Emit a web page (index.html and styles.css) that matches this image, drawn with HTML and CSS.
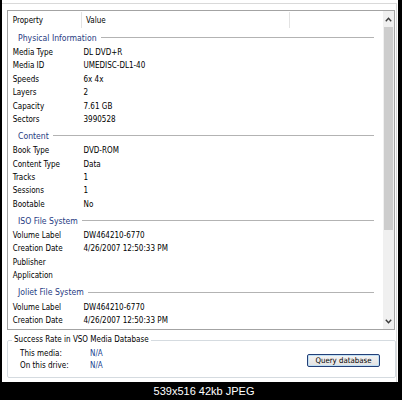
FILE: index.html
```html
<!DOCTYPE html>
<html>
<head>
<meta charset="utf-8">
<link rel="stylesheet" href="styles.css">
</head>
<body>
<div class="frame">
  <div class="panel">
    <div class="listview">
      <div class="lv-main">
        <div class="lv-header">
          <div class="hcell hprop">Property</div>
          <div class="hcell hval">Value</div>
        </div>
        <div class="group"><span>Physical Information</span><i class="gline"></i></div>
        <div class="row"><span class="k">Media Type</span><span class="v">DL DVD+R</span></div>
        <div class="row"><span class="k">Media ID</span><span class="v">UMEDISC-DL1-40</span></div>
        <div class="row"><span class="k">Speeds</span><span class="v">6x 4x</span></div>
        <div class="row"><span class="k">Layers</span><span class="v">2</span></div>
        <div class="row"><span class="k">Capacity</span><span class="v">7.61 GB</span></div>
        <div class="row"><span class="k">Sectors</span><span class="v">3990528</span></div>
        <div class="group"><span>Content</span><i class="gline"></i></div>
        <div class="row"><span class="k">Book Type</span><span class="v">DVD-ROM</span></div>
        <div class="row"><span class="k">Content Type</span><span class="v">Data</span></div>
        <div class="row"><span class="k">Tracks</span><span class="v">1</span></div>
        <div class="row"><span class="k">Sessions</span><span class="v">1</span></div>
        <div class="row"><span class="k">Bootable</span><span class="v">No</span></div>
        <div class="group"><span>ISO File System</span><i class="gline"></i></div>
        <div class="row"><span class="k">Volume Label</span><span class="v">DW464210-6770</span></div>
        <div class="row"><span class="k">Creation Date</span><span class="v">4/26/2007 12:50:33 PM</span></div>
        <div class="row"><span class="k">Publisher</span><span class="v"></span></div>
        <div class="row"><span class="k">Application</span><span class="v"></span></div>
        <div class="group"><span>Joliet File System</span><i class="gline"></i></div>
        <div class="row"><span class="k">Volume Label</span><span class="v">DW464210-6770</span></div>
        <div class="row"><span class="k">Creation Date</span><span class="v">4/26/2007 12:50:33 PM</span></div>
      </div>
      <div class="scrollbar">
        <div class="arrow">
          <svg width="7" height="5" viewBox="0 0 7 5"><path d="M0.8 4.2 L3.5 1.3 L6.2 4.2" fill="none" stroke="#3a3a3a" stroke-width="1.4"/></svg>
        </div>
        <div class="thumb"></div>
        <div class="track"></div>
        <div class="arrow">
          <svg width="7" height="5" viewBox="0 0 7 5"><path d="M0.8 0.8 L3.5 3.7 L6.2 0.8" fill="none" stroke="#3a3a3a" stroke-width="1.4"/></svg>
        </div>
      </div>
    </div>
    <fieldset class="box">
      <legend>Success Rate in VSO Media Database</legend>
      <div class="box-body">
        <div class="stats">
          <div class="srow"><span class="sk">This media:</span><span class="sv">N/A</span></div>
          <div class="srow"><span class="sk">On this drive:</span><span class="sv">N/A</span></div>
        </div>
        <button class="btn">Query database</button>
      </div>
    </fieldset>
  </div>
</div>
<div class="caption">539x516 42kb JPEG</div>
</body>
</html>
```
FILE: styles.css
```css
html, body {
  margin: 0;
  padding: 0;
}
body {
  width: 402px;
  height: 400px;
  overflow: hidden;
  background: #000;
  font-family: "DejaVu Sans Condensed", "Liberation Sans", sans-serif;
  font-size: 8px;
  color: #000;
}
.frame {
  margin-left: 2px;
  width: 396px;
  height: 382px;
  background: #fff;
  padding-top: 3px;
  box-sizing: border-box;
}
.panel {
  width: 395px;
  height: 379px;
  box-sizing: border-box;
  border-top: 1px solid #d9d9d9;
  border-right: 1px solid #d9d9d9;
  padding: 6px 0 0 5px;
}
.listview {
  width: 388px;
  height: 320px;
  box-sizing: border-box;
  border: 1px solid #a3a3a3;
  display: flex;
  overflow: hidden;
}
.lv-main {
  flex: 1;
  min-width: 0;
}
.lv-header {
  height: 17.1px;
  display: flex;
  align-items: flex-end;
}
.hcell {
  height: 16px;
  line-height: 18px;
  box-sizing: border-box;
  border-right: 1px solid #e3e3e3;
}
.hprop {
  width: 74px;
  padding-left: 4.7px;
}
.hval {
  width: 208px;
  padding-left: 4px;
}
.group {
  height: 17.9px;
  display: flex;
  align-items: center;
  padding-left: 10px;
  padding-right: 9px;
  padding-top: 1px;
  box-sizing: border-box;
  color: #1f3b82;
  font-size: 8.6px;
}
.gline {
  flex: 1;
  height: 1px;
  background: #b3b3b3;
  margin-left: 4px;
}
.row {
  height: 13.4px;
  line-height: 13.4px;
  display: flex;
  white-space: nowrap;
}
.k {
  width: 75.5px;
  padding-left: 4.7px;
  box-sizing: border-box;
}
.v {
  flex: 1;
}
.scrollbar {
  width: 11px;
  background: #f0f0f0;
  display: flex;
  flex-direction: column;
}
.arrow {
  height: 16px;
  display: flex;
  align-items: center;
  justify-content: center;
}
.thumb {
  height: 203px;
  background: #cdcdcd;
  margin: 0 1px;
}
.track {
  flex: 1;
}
.box {
  margin: 4px 0 0 0;
  padding: 0 15px 0 12px;
  width: 389px;
  height: 44px;
  box-sizing: border-box;
  border: 1px solid #d5dbe0;
  border-radius: 2px;
}
.box legend {
  padding: 0 2px;
  margin-left: -8px;
  line-height: 12px;
}
.box-body {
  display: flex;
  align-items: center;
  justify-content: space-between;
  padding-top: 2px;
}
.srow {
  height: 12px;
  line-height: 12px;
  display: flex;
}
.sk {
  width: 70px;
}
.sv {
  color: #1a3f8f;
}
.btn {
  width: 73px;
  height: 13px;
  margin-top: 0px;
  padding: 0;
  font-family: inherit;
  font-size: 7.8px;
  color: #000;
  border: 1px solid #243f77;
  border-radius: 2px;
  background: linear-gradient(#f4f4f4, #e2e2e2);
  box-shadow: inset 0 0 0 1px #bfe0f5;
}
.caption {
  height: 18px;
  line-height: 18px;
  color: #fff;
  text-align: center;
  padding-left: 6px;
  font-family: "Liberation Sans", Arial, sans-serif;
  font-size: 11px;
}
```
